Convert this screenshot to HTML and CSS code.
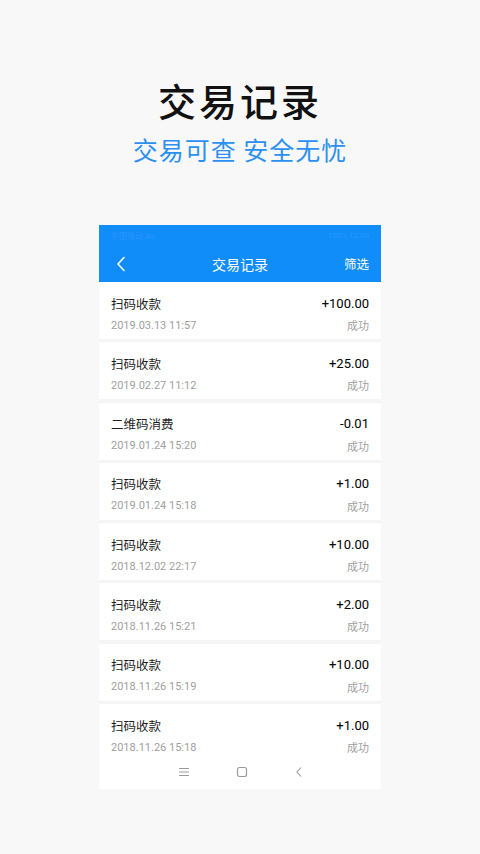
FILE: index.html
```html
<!DOCTYPE html>
<html lang="zh-CN">
<head>
<meta charset="utf-8">
<title>交易记录</title>
<link rel="stylesheet" href="styles.css">
</head>
<body>
<div class="hero">
  <h1 class="hero-title">交易记录</h1>
  <p class="hero-sub">交易可查 安全无忧</p>
</div>
<div class="phone">
  <div class="appbar">
    <div class="status">
      <span>中国移动 4G</span>
      <span>100% 12:00</span>
    </div>
    <div class="header">
      <svg class="back" width="10" height="16" viewBox="0 0 10 16"><path d="M8 1.5 L2 8 L8 14.5" fill="none" stroke="#fff" stroke-width="1.6" stroke-linecap="round" stroke-linejoin="round"/></svg>
      <span class="header-title">交易记录</span>
      <span class="filter">筛选</span>
    </div>
  </div>
  <div class="list">
    <div class="row"><div class="l1"><span class="name">扫码收款</span><span class="amt">+100.00</span></div><div class="l2"><span>2019.03.13 11:57</span><span>成功</span></div></div>
    <div class="row"><div class="l1"><span class="name">扫码收款</span><span class="amt">+25.00</span></div><div class="l2"><span>2019.02.27 11:12</span><span>成功</span></div></div>
    <div class="row"><div class="l1"><span class="name">二维码消费</span><span class="amt">-0.01</span></div><div class="l2"><span>2019.01.24 15:20</span><span>成功</span></div></div>
    <div class="row"><div class="l1"><span class="name">扫码收款</span><span class="amt">+1.00</span></div><div class="l2"><span>2019.01.24 15:18</span><span>成功</span></div></div>
    <div class="row"><div class="l1"><span class="name">扫码收款</span><span class="amt">+10.00</span></div><div class="l2"><span>2018.12.02 22:17</span><span>成功</span></div></div>
    <div class="row"><div class="l1"><span class="name">扫码收款</span><span class="amt">+2.00</span></div><div class="l2"><span>2018.11.26 15:21</span><span>成功</span></div></div>
    <div class="row"><div class="l1"><span class="name">扫码收款</span><span class="amt">+10.00</span></div><div class="l2"><span>2018.11.26 15:19</span><span>成功</span></div></div>
    <div class="row"><div class="l1"><span class="name">扫码收款</span><span class="amt">+1.00</span></div><div class="l2"><span>2018.11.26 15:18</span><span>成功</span></div></div>
  </div>
  <div class="navbar">
    <svg class="nav-menu" width="12" height="10" viewBox="0 0 12 10"><path d="M1 1.5H11M1 5H11M1 8.5H11" stroke="#9a9a9a" stroke-width="1"/></svg>
    <svg class="nav-home" width="12" height="12" viewBox="0 0 12 12"><rect x="1.5" y="1.5" width="9" height="9" rx="2" fill="none" stroke="#9a9a9a" stroke-width="1.2"/></svg>
    <svg class="nav-back" width="8" height="12" viewBox="0 0 8 12"><path d="M6 1.5 L2 6 L6 10.5" fill="none" stroke="#9a9a9a" stroke-width="1.1"/></svg>
  </div>
</div>
</body>
</html>
```
FILE: styles.css
```css
html, body {
  margin: 0;
  padding: 0;
}
body {
  background: #f8f8f8;
  font-family: Roboto, "Noto Sans CJK SC", sans-serif;
  width: 480px;
  height: 854px;
  overflow: hidden;
}
.hero {
  padding-top: 76px;
  text-align: center;
}
.hero-title {
  margin: 0;
  font-family: "Noto Sans CJK SC", sans-serif;
  font-size: 38px;
  line-height: 48px;
  font-weight: 500;
  color: #111;
  letter-spacing: 3px;
}
.hero-sub {
  margin: 9px 0 0;
  font-family: "Noto Sans CJK SC", sans-serif;
  font-size: 25px;
  line-height: 32px;
  color: #2b90f2;
  letter-spacing: 1px;
}
.phone {
  width: 282px;
  margin: 60px auto 0;
  background: #f5f5f5;
  display: flex;
  flex-direction: column;
}
.appbar {
  background: #118df9;
  height: 57px;
  display: flex;
  flex-direction: column;
}
.status {
  height: 20px;
  display: flex;
  justify-content: space-between;
  align-items: center;
  padding: 0 12px;
  font-size: 8px;
  color: rgba(255, 255, 255, 0.1);
}
.header {
  height: 37px;
  display: flex;
  align-items: center;
  justify-content: space-between;
  padding: 0 12px 0 17px;
  position: relative;
}
.back {
  display: block;
}
.header-title {
  position: absolute;
  left: 0;
  right: 0;
  text-align: center;
  font-family: "Noto Sans CJK SC", sans-serif;
  font-size: 14px;
  color: #fff;
  pointer-events: none;
}
.filter {
  font-family: "Noto Sans CJK SC", sans-serif;
  font-size: 12.5px;
  color: #fff;
}
.list {
  height: 472px;
  overflow: hidden;
  display: flex;
  flex-direction: column;
  gap: 3.3px;
}
.row {
  flex: none;
  height: 57px;
  background: #fff;
  box-sizing: border-box;
  padding: 11px 12px 0;
}
.l1 {
  height: 20px;
  display: flex;
  justify-content: space-between;
  align-items: center;
  font-size: 12.5px;
}
.name {
  font-family: "Noto Sans CJK SC", sans-serif;
  color: #1e1e1e;
}
.amt {
  color: #000;
  font-size: 13px;
  font-weight: 400;
}
.l2 {
  height: 18px;
  margin-top: 3px;
  display: flex;
  justify-content: space-between;
  align-items: center;
  font-size: 11px;
  color: #a0a0a0;
}
.navbar {
  height: 35px;
  background: #fff;
  display: flex;
  align-items: center;
  justify-content: center;
}
.navbar svg {
  display: block;
}
.nav-home {
  margin: 0 47px 0 46px;
}
```
